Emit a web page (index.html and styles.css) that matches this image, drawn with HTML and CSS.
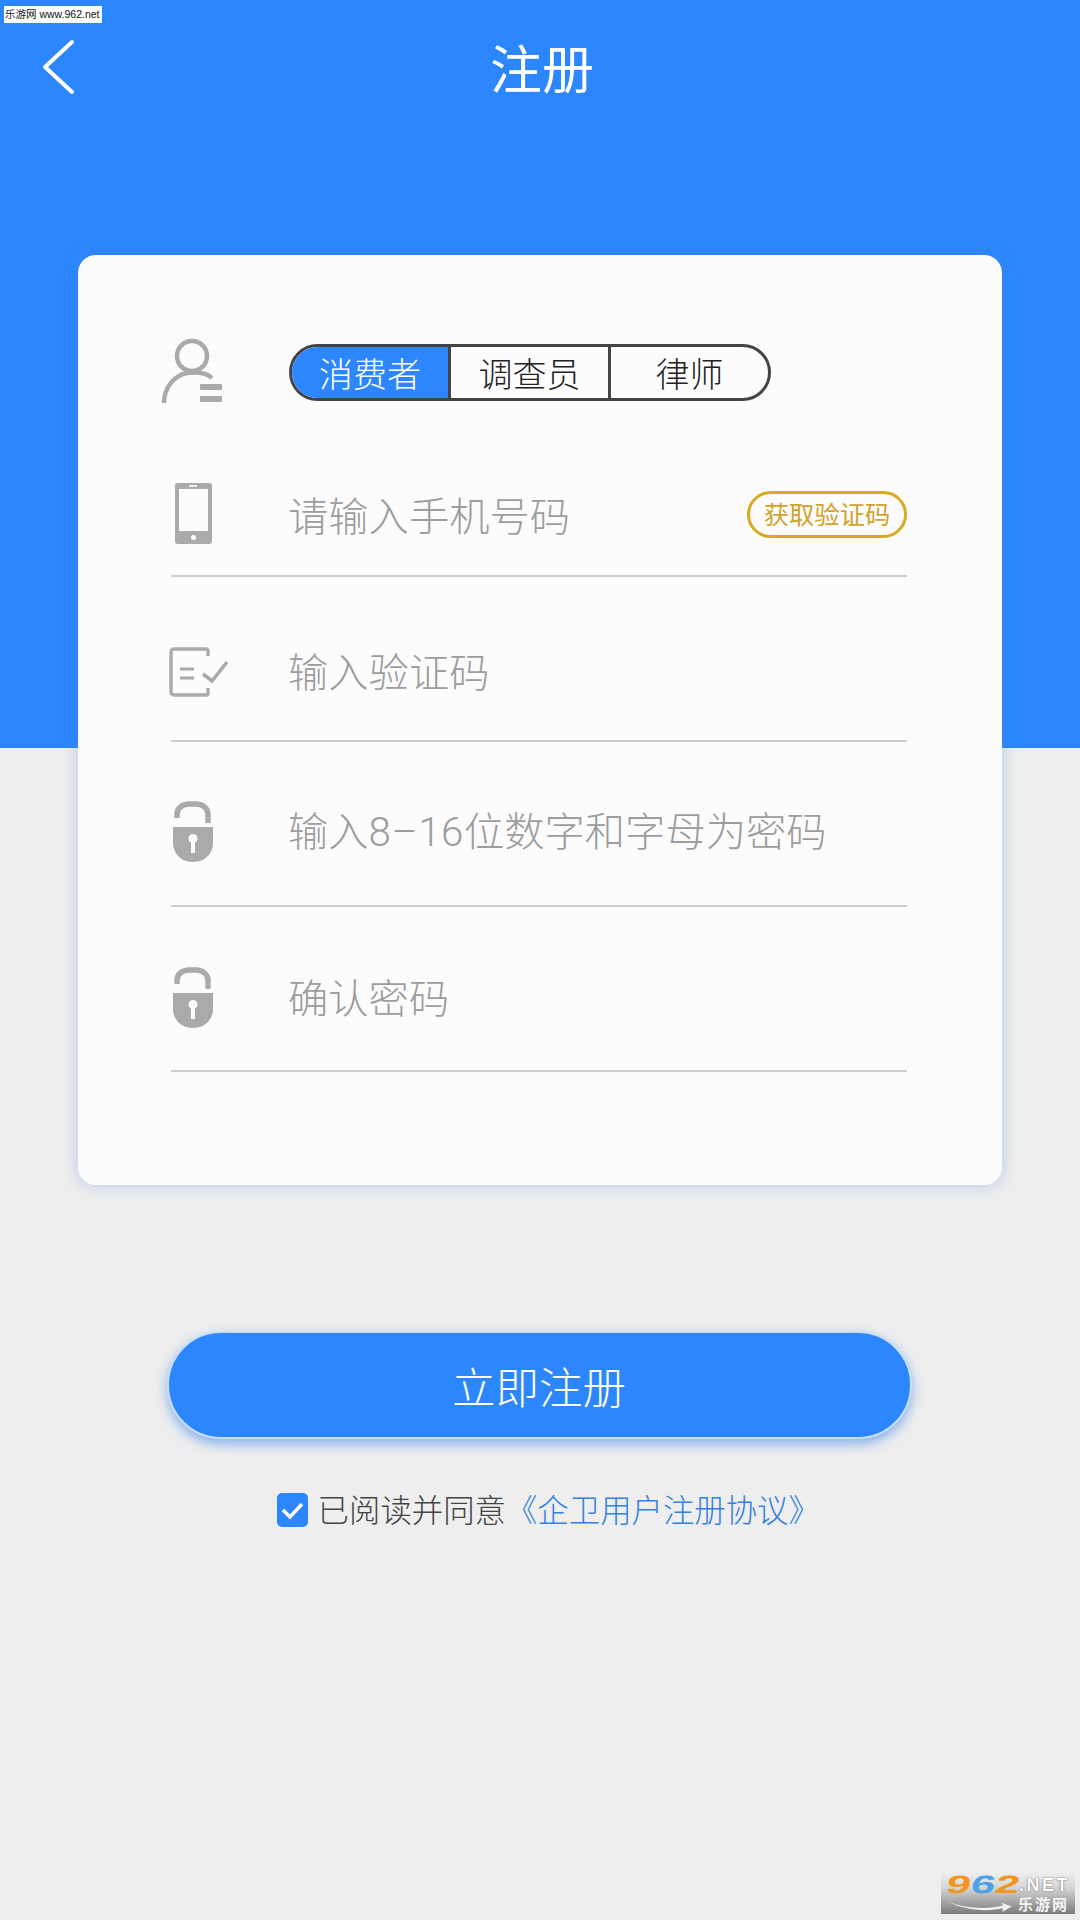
FILE: index.html
```html
<!DOCTYPE html>
<html lang="zh-CN">
<head>
<meta charset="utf-8">
<title>注册</title>
<link rel="stylesheet" href="styles.css">
</head>
<body>
<div class="stamp">乐游网 www.962.net</div>
<header class="topbar">
  <svg class="back" viewBox="0 0 34 56" aria-hidden="true"><path d="M31 3 4 28l27 25" fill="none" stroke="#fff" stroke-width="4" stroke-linecap="round" stroke-linejoin="round"/></svg>
  <h1 class="title">注册</h1>
</header>
<main class="page">
  <section class="card">
    <div class="role-row">
      <svg class="icon" viewBox="0 0 64 66" aria-hidden="true">
        <circle cx="31" cy="18" r="15" fill="none" stroke="#aaa" stroke-width="4.5"/>
        <path d="M3 65C3 48 15 37 26 35c10-1 20 0 25 5" fill="none" stroke="#aaa" stroke-width="4.5"/>
        <rect x="39" y="46" width="22" height="6" rx="1" fill="#aaa"/>
        <rect x="39" y="58" width="22" height="6" rx="1" fill="#aaa"/>
      </svg>
      <div class="segments">
        <div class="seg seg-active">消费者</div>
        <div class="seg seg-mid">调查员</div>
        <div class="seg seg-last">律师</div>
      </div>
    </div>
    <div class="row row-phone">
      <svg class="icon" viewBox="0 0 64 64" aria-hidden="true">
        <path fill-rule="evenodd" d="M7 1h31a3 3 0 0 1 3 3v55a3 3 0 0 1-3 3H7a3 3 0 0 1-3-3V4a3 3 0 0 1 3-3Zm1 6v42h29V7Z" fill="#aaa"/>
        <circle cx="22.500" cy="55.500" r="2.500" fill="#fff"/>
        <rect x="18" y="3" width="8" height="2" fill="#eee"/>
      </svg>
      <span class="placeholder">请输入手机号码</span>
      <span class="code-btn">获取验证码</span>
    </div>
    <div class="row row-code">
      <svg class="icon" viewBox="0 0 64 50" aria-hidden="true">
        <path d="M40 9V4a2 2 0 0 0-2-2H6a3 3 0 0 0-3 3v40a3 3 0 0 0 3 3h32a2 2 0 0 0 2-2v-5" fill="none" stroke="#aaa" stroke-width="3.500"/>
        <path d="M12 22h14M12 31h14" stroke="#aaa" stroke-width="3" fill="none"/>
        <path d="M35 27l9 7 15-19" stroke="#aaa" stroke-width="3.500" fill="none"/>
      </svg>
      <span class="placeholder">输入验证码</span>
    </div>
    <div class="row row-pass">
      <svg class="icon" viewBox="0 0 64 64" aria-hidden="true">
        <path d="M9 19V15a12 10 0 0 1 12-10h8a12 10 0 0 1 11 10v9" fill="none" stroke="#aaa" stroke-width="5.500"/>
        <path fill-rule="evenodd" d="M5 28h40v16a19 19 0 0 1-19 19h-2A19 19 0 0 1 5 44Zm20 7a4.500 4.500 0 0 0-2 8.500V54h4V43.500a4.500 4.500 0 0 0-2-8.500Z" fill="#aaa"/>
      </svg>
      <span class="placeholder">输入<span class="digits">8–16</span>位数字和字母为密码</span>
    </div>
    <div class="row row-confirm">
      <svg class="icon" viewBox="0 0 64 64" aria-hidden="true">
        <path d="M9 19V15a12 10 0 0 1 12-10h8a12 10 0 0 1 11 10v9" fill="none" stroke="#aaa" stroke-width="5.500"/>
        <path fill-rule="evenodd" d="M5 28h40v16a19 19 0 0 1-19 19h-2A19 19 0 0 1 5 44Zm20 7a4.500 4.500 0 0 0-2 8.500V54h4V43.500a4.500 4.500 0 0 0-2-8.500Z" fill="#aaa"/>
      </svg>
      <span class="placeholder">确认密码</span>
    </div>
  </section>
  <button class="submit" type="button">立即注册</button>
  <div class="agree">
    <svg class="check" viewBox="0 0 31 34" aria-hidden="true">
      <rect width="31" height="34" rx="5" fill="#2c87fe"/>
      <path d="M6 17l7 7 12-13" fill="none" stroke="#fff" stroke-width="3.500"/>
    </svg>
    <span class="agree-text">已阅读并同意</span>
    <span class="agree-link">《企卫用户注册协议》</span>
  </div>
</main>
<div class="logo">
  <span class="logo-num"><span class="c-orange">9</span><span class="c-blue">6</span><span class="c-orange">2</span></span>
  <span class="logo-net">.NET</span>
  <svg class="logo-swoosh" viewBox="0 0 70 14" aria-hidden="true"><path d="M1 2C20 10 45 10 60 6l-2-3 11 4-10 6 1-4C42 13 18 11 1 2Z" fill="#f2f2f2"/></svg>
  <span class="logo-cn">乐游网</span>
</div>
</body>
</html>
```
FILE: styles.css
```css
* { box-sizing: border-box; }
html, body { margin: 0; padding: 0; }
body {
  position: relative;
  width: 1080px;
  height: 1920px;
  overflow: hidden;
  background: linear-gradient(to bottom, #2c87fe 0, #2c87fe 748px, #eeeeee 748px, #eeeeee 100%);
  font-family: "Noto Sans CJK SC", "Noto Sans", sans-serif;
  font-weight: 300;
}
.stamp {
  position: absolute;
  left: 4px;
  top: 6px;
  width: 98px;
  height: 17px;
  background: #fff;
  color: #111;
  font-family: "Liberation Sans", "Noto Sans CJK SC", sans-serif;
  font-weight: 400;
  font-size: 10.500px;
  line-height: 17px;
  white-space: nowrap;
  padding-left: 1px;
}
.topbar {
  height: 255px;
  display: grid;
  grid-template-columns: 1fr auto 1fr;
  align-items: start;
  padding: 39px 0 0 41px;
}
.back { width: 34px; height: 56px; }
.title {
  margin: 0;
  color: #fff;
  font-size: 52px;
  font-weight: 400;
  line-height: 60px;
  margin-left: -37px;
  margin-top: -2px;
}
.page { display: flex; flex-direction: column; align-items: center; }
.card {
  width: 924px;
  height: 930px;
  background: #fcfcfc;
  border-radius: 18px;
  box-shadow: 0 0 16px rgba(60, 130, 220, .35);
  padding: 89px 95px 0 93px;
}
.role-row { display: flex; align-items: center; height: 56px; }
.role-row .icon { width: 64px; height: 66px; margin-top: -2px; margin-right: 64px; margin-left: -10px; flex: none; }
.segments {
  width: 482px;
  height: 57px;
  border: 3px solid #444;
  border-radius: 29px;
  display: flex;
  overflow: hidden;
  font-size: 34px;
  margin-top: 1px;
}
.seg { display: flex; align-items: center; justify-content: center; color: #222; line-height: 1; }
.seg-active { width: 159px; background: #2c87fe; color: #fff; border-right: 3px solid #444; }
.seg-mid { width: 160px; border-right: 3px solid #444; }
.seg-last { flex: 1; }
.row {
  display: flex;
  align-items: center;
  border-bottom: 2px solid #cfcfcf;
  height: 165px;
  position: relative;
}
.row-phone { height: 177px; padding-top: 91px; padding-bottom: 38px; }
.row-code { padding-top: 66px; padding-bottom: 42px; }
.row-pass { padding-top: 43px; padding-bottom: 28px; }
.row-confirm { padding-top: 42px; padding-bottom: 26px; }
.row .icon { width: 64px; height: 64px; flex: none; margin-right: 53px; }
.row-code .icon { height: 50px; margin-left: -3px; margin-right: 56px; margin-top: 2px; }
.row-pass .icon, .row-confirm .icon { margin-left: -3px; margin-right: 56px; }
.placeholder { font-size: 40.300px; color: #9d9d9d; white-space: nowrap; line-height: 1; }
.digits { font-family: Roboto, sans-serif; font-weight: 300; letter-spacing: .5px; }
.code-btn {
  margin-left: auto;
  width: 160px;
  height: 47px;
  border: 3px solid #d9a91f;
  border-radius: 24px;
  color: #d2a32b;
  font-size: 25.300px;
  line-height: 1;
  font-weight: 400;
  display: flex;
  align-items: center;
  justify-content: center;
  white-space: nowrap;
}
.submit {
  margin-top: 146px;
  margin-left: -2px;
  width: 745px;
  height: 108px;
  border: 2px solid #c9def9;
  border-radius: 54px;
  background: #2c87fe;
  color: #fff;
  font-family: inherit;
  font-weight: 300;
  font-size: 43.500px;
  box-shadow: 0 5px 12px rgba(44, 125, 235, .55);
}
.agree {
  margin-top: 54px;
  margin-left: 17px;
  display: flex;
  align-items: flex-start;
  font-size: 31.400px;
  line-height: 32px;
  white-space: nowrap;
}
.check { width: 31px; height: 34px; margin-right: 9.500px; flex: none; }
.agree-text { color: #444; }
.agree-link { color: #3381e0; }
.logo {
  position: absolute;
  left: 941px;
  top: 1870px;
  width: 134px;
  height: 44px;
  background: linear-gradient(to bottom, #f2f2f2 0%, #d5d5d5 40%, #7c7c7c 100%);
  font-family: "Liberation Sans", sans-serif;
}
.logo-num {
  position: absolute;
  left: 9px;
  top: 0;
  font-size: 25px;
  font-weight: 700;
  line-height: 28px;
  transform: skewX(-12deg) scaleX(1.750);
  transform-origin: left top;
}
.c-orange { color: #f0951e; }
.c-blue { color: #4aa3e6; }
.logo-net { position: absolute; left: 78px; top: 4px; font-size: 18px; font-weight: 700; line-height: 22px; color: #fff; letter-spacing: 2.500px; text-shadow: 0 0 1.500px #333; }
.logo-swoosh { position: absolute; left: 6px; top: 30px; width: 66px; height: 13px; }
.logo-cn { position: absolute; left: 77px; top: 24px; font-size: 15px; font-family: "Noto Sans CJK SC", sans-serif; font-weight: 700; line-height: 20px; color: #f4f4f4; letter-spacing: 2px; }
```
